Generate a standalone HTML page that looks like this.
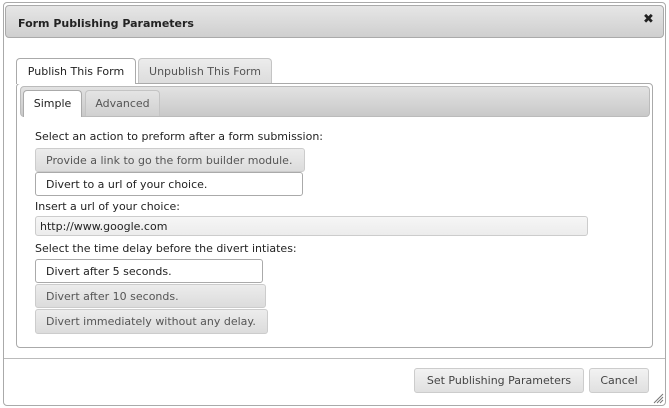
<!DOCTYPE html>
<html><head><style>
*{box-sizing:border-box;margin:0;padding:0}
body{width:669px;height:408px;background:#fff;font-family:"DejaVu Sans","Liberation Sans",sans-serif;font-size:11px;color:#222;position:relative;overflow:hidden}
.a{position:absolute}
.dlg{left:3px;top:2px;width:663px;height:404px;border:1px solid #aaa;border-radius:4px;background:#fff}
.title{left:5px;top:5px;width:659px;height:33px;border:1px solid #aaa;border-radius:4px;background:linear-gradient(#e6e6e6,#cfcfcf);font-weight:bold;font-size:11px;padding:11px 0 0 12px;color:#222}
.x{left:643px;top:12px;font-weight:bold;font-size:13px}
.tab{height:26px;border:1px solid #c4c4c4;border-bottom:none;border-radius:4px 4px 0 0;padding:6px 0 0 0;text-align:center}
.panel{left:16px;top:83px;width:637px;height:265px;border:1px solid #aaa;border-radius:4px}
.bar{left:20px;top:86px;width:630px;height:31px;border:1px solid #bbb;border-radius:4px;background:linear-gradient(#e2e2e2,#c9c9c9)}
.opt{height:24px;border:1px solid #ccc;border-radius:3px;padding:5px 0 0 10px}
.sel{background:#fff;border-color:#aaa;color:#222}
.uns{background:linear-gradient(#ececec,#dcdcdc);color:#555}
.btn{top:368px;height:25px;border:1px solid #ccc;border-radius:3px;background:linear-gradient(#f2f2f2,#e0e0e0);color:#444;text-align:center;padding-top:5px}
</style></head><body>
<div class="a dlg"></div>
<div class="a title">Form Publishing Parameters</div>
<div class="a x">✖</div>
<div class="a tab" style="left:16px;top:58px;width:120px;height:26px;background:#fff;border-color:#aaa;z-index:2">Publish This Form</div>
<div class="a tab" style="left:138px;top:58px;width:134px;background:linear-gradient(#ececec,#dcdcdc);color:#555">Unpublish This Form</div>
<div class="a panel"></div>
<div class="a bar"></div>
<div class="a tab" style="left:23px;top:90px;width:59px;height:27px;background:#fff;border-color:#aaa">Simple</div>
<div class="a tab" style="left:85px;top:90px;width:75px;background:linear-gradient(#e4e4e4,#d0d0d0);color:#555">Advanced</div>
<div class="a" style="left:35px;top:130px">Select an action to preform after a form submission:</div>
<div class="a opt uns" style="left:35px;top:148px;width:270px">Provide a link to go the form builder module.</div>
<div class="a opt sel" style="left:35px;top:172px;width:268px">Divert to a url of your choice.</div>
<div class="a" style="left:35px;top:200px">Insert a url of your choice:</div>
<div class="a" style="left:35px;top:216px;width:553px;height:20px;border:1px solid #ccc;border-radius:3px;background:linear-gradient(#f6f6f6,#ececec);padding:3px 0 0 4px">http://www.google.com</div>
<div class="a" style="left:35px;top:242px">Select the time delay before the divert intiates:</div>
<div class="a opt sel" style="left:35px;top:259px;width:228px">Divert after 5 seconds.</div>
<div class="a opt uns" style="left:35px;top:284px;width:231px">Divert after 10 seconds.</div>
<div class="a opt uns" style="left:35px;top:309px;width:233px;height:25px">Divert immediately without any delay.</div>
<div class="a" style="left:4px;top:358px;width:661px;border-top:1px solid #bbb"></div>
<div class="a btn" style="left:414px;width:170px">Set Publishing Parameters</div>
<div class="a btn" style="left:589px;width:60px">Cancel</div>
<svg class="a" style="left:653px;top:393px" width="11" height="11"><path d="M1 10L10 1M4 10L10 4M7 10L10 7" stroke="#777" stroke-width="1"/></svg>
</body></html>
